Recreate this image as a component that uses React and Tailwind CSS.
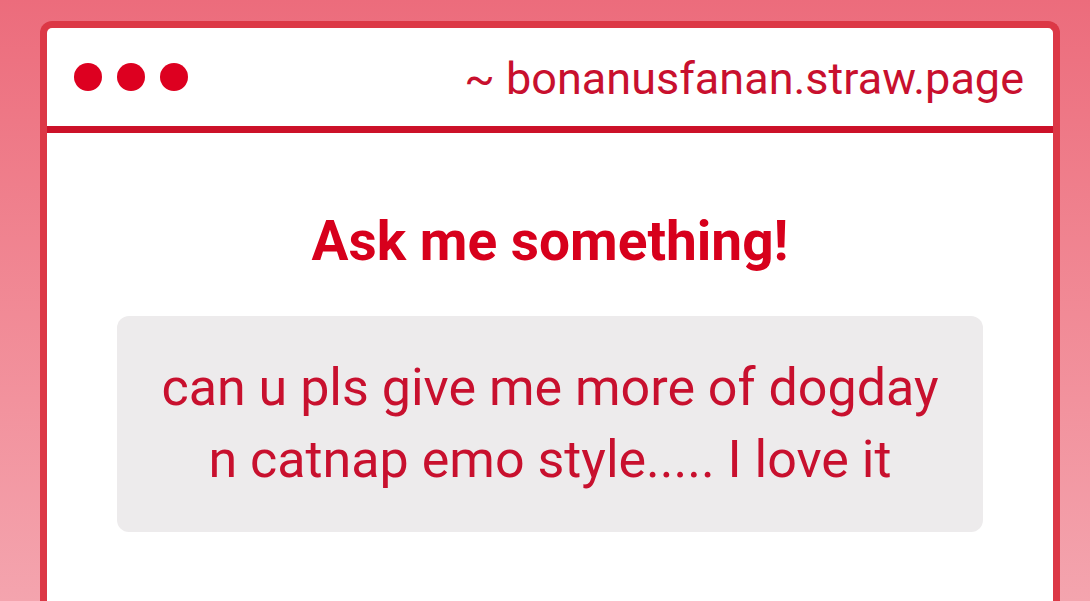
export default function App() {
  return (
    <div className="h-[601px] w-[1090px] overflow-hidden bg-gradient-to-b from-[#ec6c7c] to-[#f4a4ae] pl-10 pr-[30px] pt-[21px] font-['Roboto','Liberation_Sans',sans-serif]">
      <div className="h-[620px] overflow-hidden rounded-t-[12px] border-[7px] border-b-0 border-[#dc3846] bg-white">
        <div className="flex h-[98px] items-center justify-between pl-[27px] pr-[29px]">
          <div className="flex gap-[15px]">
            <span className="h-[28px] w-[28px] rounded-full bg-[#dd0020]" />
            <span className="h-[28px] w-[28px] rounded-full bg-[#dd0020]" />
            <span className="h-[28px] w-[28px] rounded-full bg-[#dd0020]" />
          </div>
          <div className="pt-[3px] text-[45px] leading-none text-[#c8102e]">~ bonanusfanan.straw.page</div>
        </div>
        <div className="h-[7px] bg-[#cc1129]" />
        <div className="flex flex-col items-center pt-[81px]">
          <h1 className="text-[55px] font-bold leading-none text-[#d7001c]">Ask me something!</h1>
          <div className="mt-[47px] w-[866px] rounded-[12px] bg-[#edebec] pb-[36px] pt-[36px] text-center text-[52px] leading-[72px] text-[#c8102e]">
            can u pls give me more of dogday
            <br />
            n catnap emo style..... I love it
          </div>
        </div>
      </div>
    </div>
  );
}
